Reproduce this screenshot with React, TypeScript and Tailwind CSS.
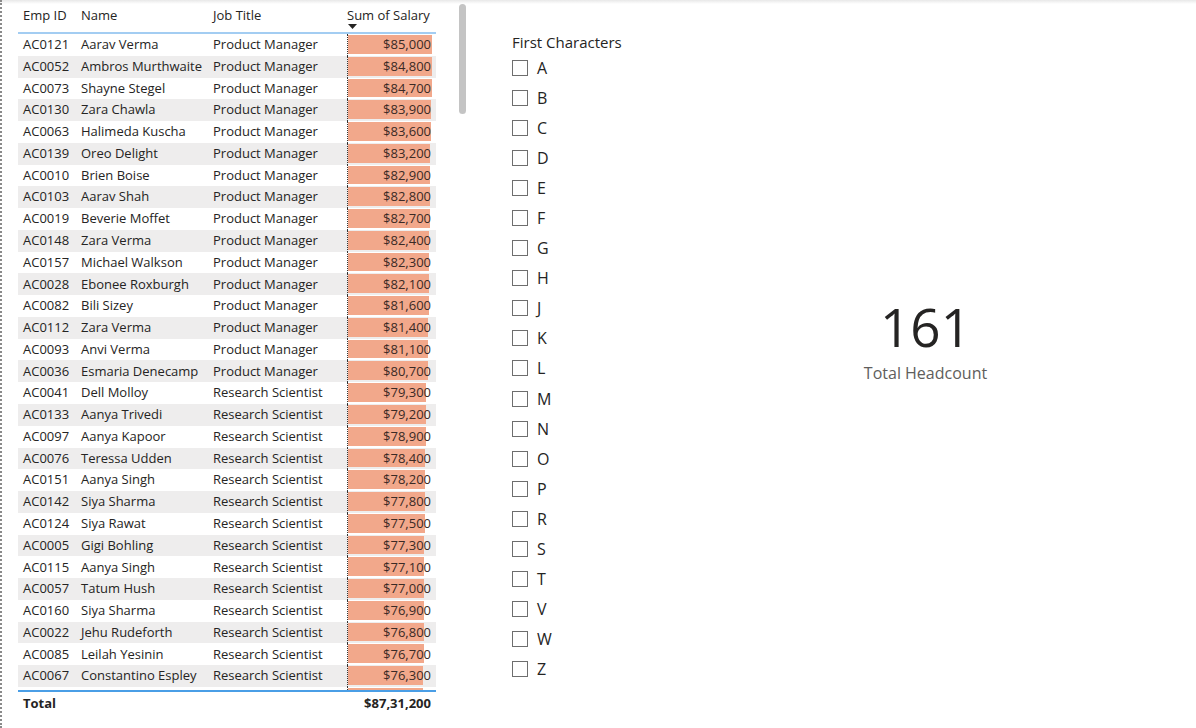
import React from "react";

const rows: [string, string, string, number][] = [
  ["AC0121", "Aarav Verma", "Product Manager", 85000],
  ["AC0052", "Ambros Murthwaite", "Product Manager", 84800],
  ["AC0073", "Shayne Stegel", "Product Manager", 84700],
  ["AC0130", "Zara Chawla", "Product Manager", 83900],
  ["AC0063", "Halimeda Kuscha", "Product Manager", 83600],
  ["AC0139", "Oreo Delight", "Product Manager", 83200],
  ["AC0010", "Brien Boise", "Product Manager", 82900],
  ["AC0103", "Aarav Shah", "Product Manager", 82800],
  ["AC0019", "Beverie Moffet", "Product Manager", 82700],
  ["AC0148", "Zara Verma", "Product Manager", 82400],
  ["AC0157", "Michael Walkson", "Product Manager", 82300],
  ["AC0028", "Ebonee Roxburgh", "Product Manager", 82100],
  ["AC0082", "Bili Sizey", "Product Manager", 81600],
  ["AC0112", "Zara Verma", "Product Manager", 81400],
  ["AC0093", "Anvi Verma", "Product Manager", 81100],
  ["AC0036", "Esmaria Denecamp", "Product Manager", 80700],
  ["AC0041", "Dell Molloy", "Research Scientist", 79300],
  ["AC0133", "Aanya Trivedi", "Research Scientist", 79200],
  ["AC0097", "Aanya Kapoor", "Research Scientist", 78900],
  ["AC0076", "Teressa Udden", "Research Scientist", 78400],
  ["AC0151", "Aanya Singh", "Research Scientist", 78200],
  ["AC0142", "Siya Sharma", "Research Scientist", 77800],
  ["AC0124", "Siya Rawat", "Research Scientist", 77500],
  ["AC0005", "Gigi Bohling", "Research Scientist", 77300],
  ["AC0115", "Aanya Singh", "Research Scientist", 77100],
  ["AC0057", "Tatum Hush", "Research Scientist", 77000],
  ["AC0160", "Siya Sharma", "Research Scientist", 76900],
  ["AC0022", "Jehu Rudeforth", "Research Scientist", 76800],
  ["AC0085", "Leilah Yesinin", "Research Scientist", 76700],
  ["AC0067", "Constantino Espley", "Research Scientist", 76300],
];

const letters = ["A", "B", "C", "D", "E", "F", "G", "H", "J", "K", "L", "M", "N", "O", "P", "R", "S", "T", "V", "W", "Z"];

const fmt = (n: number) => "$" + n.toLocaleString("en-US");

const App = () => {
  return (
    <div
      className="relative flex w-[1196px] h-[728px] overflow-hidden bg-white text-[#252423]"
      style={{ fontFamily: '"Segoe UI", "Open Sans", sans-serif' }}
    >
      {/* top shadow */}
      <div className="absolute left-0 top-0 w-full h-[4px] bg-gradient-to-b from-[#e8e8e8] to-white" />

      {/* Table visual */}
      <div className="relative w-[470px] h-full border-l-2 border-dotted border-[#8a8a8a] pl-[16px] pt-[5px]">
        <div className="w-[418px] text-[13px]">
          {/* header */}
          <div className="flex h-[29px] items-start pt-[1px] border-b-2 border-[#a3cdf2]">
            <div className="w-[58px] pl-[5px]">Emp ID</div>
            <div className="w-[132px] pl-[5px]">Name</div>
            <div className="w-[139px] pl-[5px]">Job Title</div>
            <div className="relative w-[89px]">
              Sum of Salary
              <svg className="absolute left-[1px] top-[18px]" width="9" height="5" viewBox="0 0 9 5">
                <path d="M0 0 L9 0 L4.5 5 Z" fill="#252423" />
              </svg>
            </div>
          </div>

          {/* body */}
          <div className="h-[658px] overflow-hidden border-b-2 border-[#4a9ee6]">
            {rows.map(([id, name, job, sal], i) => (
              <div
                key={id}
                className={`flex h-[21.78px] items-center ${i % 2 === 1 ? "bg-[#eeeded]" : "bg-white"}`}
              >
                <div className="w-[58px] pl-[5px] whitespace-nowrap">{id}</div>
                <div className="w-[132px] pl-[5px] whitespace-nowrap">{name}</div>
                <div className="w-[139px] pl-[5px] whitespace-nowrap">{job}</div>
                <div className="relative w-[89px] h-full border-l border-dotted border-[#333]">
                  <div
                    className="absolute left-0 top-[1px] bottom-[2px] bg-[#f2a88b]"
                    style={{ width: `${(sal / 85000) * 84}px` }}
                  />
                  <div className="relative h-full flex items-center justify-end pr-[5px] text-[#3a2a25]">
                    {fmt(sal)}
                  </div>
                </div>
              </div>
            ))}
            {/* partially scrolled next row */}
            <div className="flex h-[5px]">
              <div className="w-[329px]" />
              <div className="relative w-[89px] h-full border-l border-dotted border-[#333]">
                <div className="absolute left-0 top-[1px] bottom-0 w-[75px] bg-[#f2a88b]" />
              </div>
            </div>
          </div>

          {/* total */}
          <div className="flex h-[24px] items-center font-bold">
            <div className="w-[329px] pl-[5px]">Total</div>
            <div className="w-[89px] text-right pr-[5px]">$87,31,200</div>
          </div>
        </div>

        {/* scrollbar */}
        <div className="absolute left-[457px] top-[4px] w-[7px] h-[110px] rounded-full bg-[#c4c4c4]" />
      </div>

      {/* Slicer */}
      <div className="w-[185px] pl-[42px] pt-[32px]">
        <div className="text-[15px] leading-[20px] text-[#252423]">First Characters</div>
        <div className="mt-[1px] flex flex-col">
          {letters.map((l) => (
            <div key={l} className="flex h-[30.05px] items-center">
              <div className="w-[16px] h-[16px] border border-[#6e6e6e] bg-white" />
              <span className="ml-[9px] text-[16px] leading-none text-[#252423]">{l}</span>
            </div>
          ))}
        </div>
      </div>

      {/* Card */}
      <div className="flex-1 flex flex-col items-center pt-[301px]">
        <div className="text-[53px] leading-[52px] text-[#252423]">161</div>
        <div className="mt-[11px] text-[16px] leading-[18px] text-[#605e5c]">Total Headcount</div>
      </div>
    </div>
  );
};

export default App;
